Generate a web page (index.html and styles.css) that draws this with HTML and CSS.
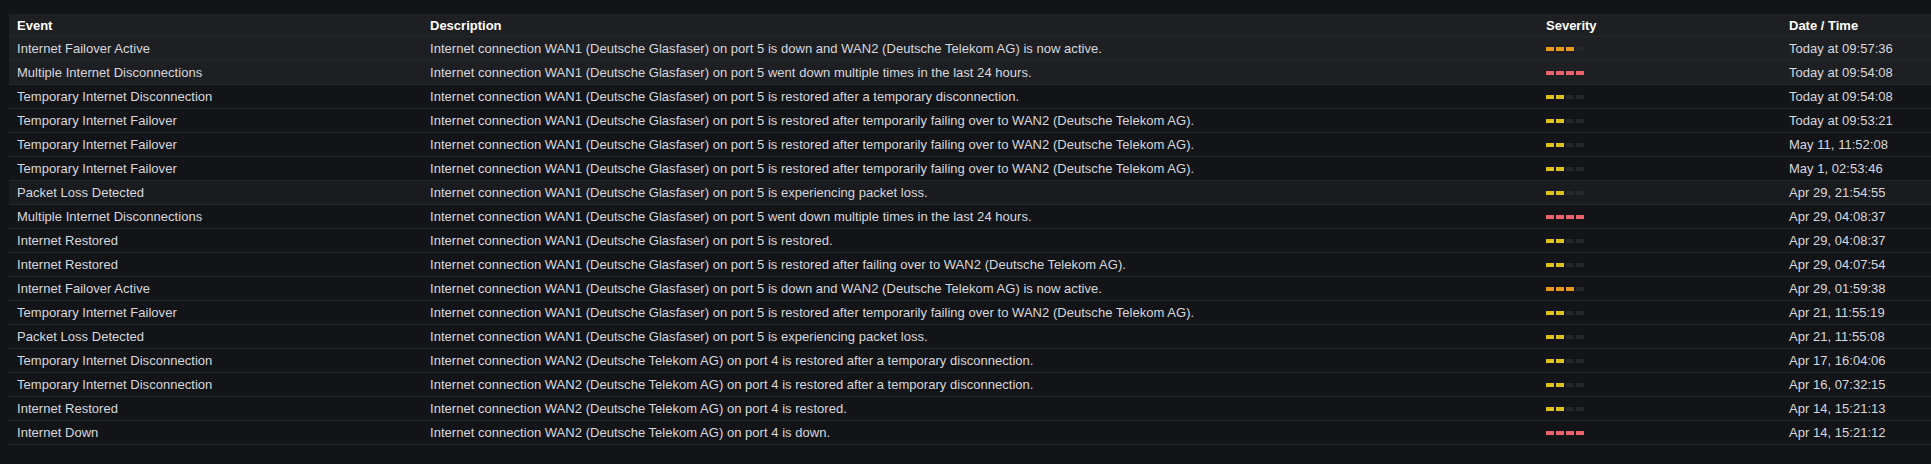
FILE: index.html
```html
<!DOCTYPE html>
<html lang="en">
<head>
    <meta charset="UTF-8">
    <title>Internet Events</title>
    <link rel="stylesheet" href="styles.css">
</head>
<body>
    <div class="panel">
        <table class="events">
            <colgroup>
                <col class="colEvent">
                <col class="colDesc">
                <col class="colSev">
                <col class="colDate">
            </colgroup>
            <thead>
                <tr>
                    <th>Event</th>
                    <th>Description</th>
                    <th>Severity</th>
                    <th>Date / Time</th>
                </tr>
            </thead>
            <tbody>
                <tr class="unread">
                    <td>Internet Failover Active</td>
                    <td>Internet connection WAN1 (Deutsche Glasfaser) on port 5 is down and WAN2 (Deutsche Telekom AG) is now active.</td>
                    <td><div class="sev sev3"><span></span><span></span><span></span><span></span></div></td>
                    <td>Today at 09:57:36</td>
                </tr>
                <tr class="unread">
                    <td>Multiple Internet Disconnections</td>
                    <td>Internet connection WAN1 (Deutsche Glasfaser) on port 5 went down multiple times in the last 24 hours.</td>
                    <td><div class="sev sev4"><span></span><span></span><span></span><span></span></div></td>
                    <td>Today at 09:54:08</td>
                </tr>
                <tr>
                    <td>Temporary Internet Disconnection</td>
                    <td>Internet connection WAN1 (Deutsche Glasfaser) on port 5 is restored after a temporary disconnection.</td>
                    <td><div class="sev sev2"><span></span><span></span><span></span><span></span></div></td>
                    <td>Today at 09:54:08</td>
                </tr>
                <tr>
                    <td>Temporary Internet Failover</td>
                    <td>Internet connection WAN1 (Deutsche Glasfaser) on port 5 is restored after temporarily failing over to WAN2 (Deutsche Telekom AG).</td>
                    <td><div class="sev sev2"><span></span><span></span><span></span><span></span></div></td>
                    <td>Today at 09:53:21</td>
                </tr>
                <tr>
                    <td>Temporary Internet Failover</td>
                    <td>Internet connection WAN1 (Deutsche Glasfaser) on port 5 is restored after temporarily failing over to WAN2 (Deutsche Telekom AG).</td>
                    <td><div class="sev sev2"><span></span><span></span><span></span><span></span></div></td>
                    <td>May 11, 11:52:08</td>
                </tr>
                <tr>
                    <td>Temporary Internet Failover</td>
                    <td>Internet connection WAN1 (Deutsche Glasfaser) on port 5 is restored after temporarily failing over to WAN2 (Deutsche Telekom AG).</td>
                    <td><div class="sev sev2"><span></span><span></span><span></span><span></span></div></td>
                    <td>May 1, 02:53:46</td>
                </tr>
                <tr class="hover">
                    <td>Packet Loss Detected</td>
                    <td>Internet connection WAN1 (Deutsche Glasfaser) on port 5 is experiencing packet loss.</td>
                    <td><div class="sev sev2"><span></span><span></span><span></span><span></span></div></td>
                    <td>Apr 29, 21:54:55</td>
                </tr>
                <tr>
                    <td>Multiple Internet Disconnections</td>
                    <td>Internet connection WAN1 (Deutsche Glasfaser) on port 5 went down multiple times in the last 24 hours.</td>
                    <td><div class="sev sev4"><span></span><span></span><span></span><span></span></div></td>
                    <td>Apr 29, 04:08:37</td>
                </tr>
                <tr>
                    <td>Internet Restored</td>
                    <td>Internet connection WAN1 (Deutsche Glasfaser) on port 5 is restored.</td>
                    <td><div class="sev sev2"><span></span><span></span><span></span><span></span></div></td>
                    <td>Apr 29, 04:08:37</td>
                </tr>
                <tr>
                    <td>Internet Restored</td>
                    <td>Internet connection WAN1 (Deutsche Glasfaser) on port 5 is restored after failing over to WAN2 (Deutsche Telekom AG).</td>
                    <td><div class="sev sev2"><span></span><span></span><span></span><span></span></div></td>
                    <td>Apr 29, 04:07:54</td>
                </tr>
                <tr>
                    <td>Internet Failover Active</td>
                    <td>Internet connection WAN1 (Deutsche Glasfaser) on port 5 is down and WAN2 (Deutsche Telekom AG) is now active.</td>
                    <td><div class="sev sev3"><span></span><span></span><span></span><span></span></div></td>
                    <td>Apr 29, 01:59:38</td>
                </tr>
                <tr>
                    <td>Temporary Internet Failover</td>
                    <td>Internet connection WAN1 (Deutsche Glasfaser) on port 5 is restored after temporarily failing over to WAN2 (Deutsche Telekom AG).</td>
                    <td><div class="sev sev2"><span></span><span></span><span></span><span></span></div></td>
                    <td>Apr 21, 11:55:19</td>
                </tr>
                <tr>
                    <td>Packet Loss Detected</td>
                    <td>Internet connection WAN1 (Deutsche Glasfaser) on port 5 is experiencing packet loss.</td>
                    <td><div class="sev sev2"><span></span><span></span><span></span><span></span></div></td>
                    <td>Apr 21, 11:55:08</td>
                </tr>
                <tr>
                    <td>Temporary Internet Disconnection</td>
                    <td>Internet connection WAN2 (Deutsche Telekom AG) on port 4 is restored after a temporary disconnection.</td>
                    <td><div class="sev sev2"><span></span><span></span><span></span><span></span></div></td>
                    <td>Apr 17, 16:04:06</td>
                </tr>
                <tr>
                    <td>Temporary Internet Disconnection</td>
                    <td>Internet connection WAN2 (Deutsche Telekom AG) on port 4 is restored after a temporary disconnection.</td>
                    <td><div class="sev sev2"><span></span><span></span><span></span><span></span></div></td>
                    <td>Apr 16, 07:32:15</td>
                </tr>
                <tr>
                    <td>Internet Restored</td>
                    <td>Internet connection WAN2 (Deutsche Telekom AG) on port 4 is restored.</td>
                    <td><div class="sev sev2"><span></span><span></span><span></span><span></span></div></td>
                    <td>Apr 14, 15:21:13</td>
                </tr>
                <tr>
                    <td>Internet Down</td>
                    <td>Internet connection WAN2 (Deutsche Telekom AG) on port 4 is down.</td>
                    <td><div class="sev sev4"><span></span><span></span><span></span><span></span></div></td>
                    <td>Apr 14, 15:21:12</td>
                </tr>
            </tbody>
        </table>
    </div>
</body>
</html>
```

FILE: styles.css
```css
body {
    margin: 0;
    background-color: #131417;
    font-family: "Liberation Sans", Arial, sans-serif;
    font-size: 13px;
    color: #d8d9de;
}
.panel {
    padding: 14px 0 0 9px;
}
table.events {
    width: 100%;
    border-collapse: collapse;
    table-layout: fixed;
}
.colEvent { width: 413px; }
.colDesc { width: 1116px; }
.colSev { width: 243px; }
th {
    text-align: left;
    font-weight: bold;
    color: #ffffff;
    background-color: #1e1f23;
    height: 22px;
    padding: 0 8px;
    border-bottom: 1px solid #26272b;
}
td {
    height: 23px;
    padding: 0 8px;
    border-bottom: 1px solid #26272b;
    white-space: nowrap;
    letter-spacing: 0.03px;
}
tr.unread td {
    background-color: #1e1f23;
}
tr.hover td {
    background-color: #1a1b1e;
}
.sev {
    display: flex;
    gap: 2px;
}
.sev span {
    width: 8px;
    height: 4px;
    background-color: #26272b;
}
.sev2 span:nth-child(-n+2) { background-color: #e0c11c; }
.sev3 span:nth-child(-n+3) { background-color: #e8991b; }
.sev4 span { background-color: #ee636b; }
```
